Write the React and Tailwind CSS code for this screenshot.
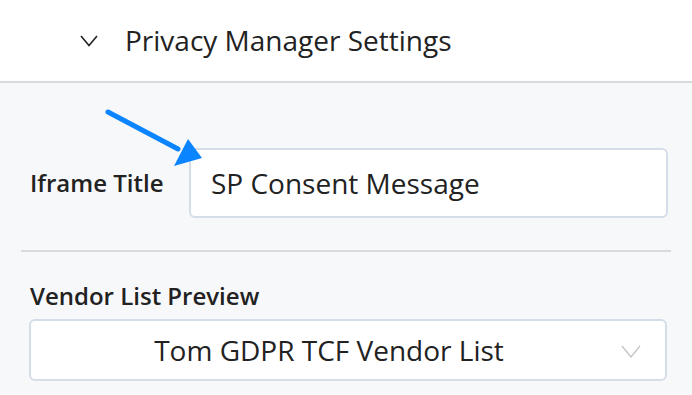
export default function App() {
  return (
    <div className="w-[692px] h-[395px] overflow-hidden bg-[#f7f8fa] font-['Open_Sans',sans-serif] text-[#222]">
      {/* Header */}
      <div className="h-[83px] bg-white border-b-2 border-[#d9dadc] flex items-center pl-[80px]">
        <svg width="18" height="12" viewBox="0 0 18 12" className="mr-[27px] mt-[1px]">
          <path d="M1 1 L9 10.5 L17 1" fill="none" stroke="#222" strokeWidth="1.6" />
        </svg>
        <span className="text-[28px] leading-none -mt-[2px]">Privacy Manager Settings</span>
      </div>

      {/* Body */}
      <div className="relative px-[21px] pt-[65px]">
        <div className="flex items-center pl-[9px]">
          <label className="w-[159px] text-[24px] font-semibold leading-none">Iframe Title</label>
          <div className="w-[479px] h-[70px] bg-white border-2 border-[#d5dee8] rounded-[6px] flex items-center px-[20px]">
            <span className="text-[28px] leading-none">SP Consent Message</span>
          </div>
        </div>

        {/* Arrow */}
        <svg className="absolute left-[100px] top-[20px]" width="110" height="70" viewBox="0 0 110 70">
          <line x1="8" y1="9" x2="78" y2="46" stroke="#0a84ff" strokeWidth="5" strokeLinecap="round" />
          <polygon points="102,55 74,63 88,36" fill="#0a84ff" />
        </svg>

        <div className="mt-[32px] border-t-2 border-[#d9dadc]" />

        <div className="pl-[9px] mt-[32px] text-[24px] font-semibold leading-none">Vendor List Preview</div>

        <div className="ml-[8px] mt-[11px] w-[638px] h-[62px] bg-white border-2 border-[#d5dee8] rounded-[6px] relative flex items-center justify-center pr-[38px]">
          <span className="text-[28px] leading-none">Tom GDPR TCF Vendor List</span>
          <svg className="absolute right-[24px] top-[24px]" width="20" height="13" viewBox="0 0 20 13">
            <path d="M1 1 L10 12 L19 1" fill="none" stroke="#c4c6c9" strokeWidth="1.4" />
          </svg>
        </div>
      </div>
    </div>
  );
}
